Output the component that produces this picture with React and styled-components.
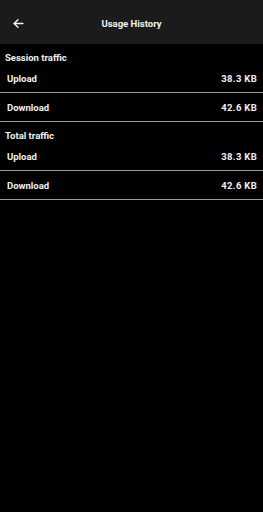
import styled, { createGlobalStyle } from "styled-components"

const GlobalStyle = createGlobalStyle`
  html, body {
    margin: 0;
    padding: 0;
    background: #000;
    min-height: 100vh;
  }
  * {
    box-sizing: border-box;
  }
`

const Pantalla = styled.div`
  min-height: 100vh;
  background: #000;
  color: #f2f2f2;
  font-family: Roboto, "Liberation Sans", sans-serif;
  font-weight: 700;
  font-size: 9.5px;
`

const Cabecera = styled.header`
  height: 44px;
  background: #1b1b1b;
  display: flex;
  align-items: center;
  padding-top: 3px;
`

const BotonAtras = styled.button`
  width: 36px;
  height: 36px;
  border: none;
  background: transparent;
  display: flex;
  align-items: center;
  justify-content: center;
  padding: 0;
  color: #f2f2f2;
`

const Titulo = styled.h1`
  flex: 1;
  margin: 0 36px 0 0;
  text-align: center;
  font-size: 9.5px;
  font-weight: 700;
`

const TituloSeccion = styled.div`
  padding: 8px 5px 0;
  line-height: 12px;
  height: 20px;
`

const Fila = styled.div`
  height: 29px;
  display: flex;
  align-items: center;
  justify-content: space-between;
  padding: 0 6px 0 7px;
  border-bottom: 1.5px solid #9a9a9a;
`

const Valor = styled.span`
  letter-spacing: 0.3px;
`

const secciones = [
  { titulo: "Session traffic", subida: "38.3 KB", bajada: "42.6 KB" },
  { titulo: "Total traffic", subida: "38.3 KB", bajada: "42.6 KB" },
]

const App = () => {
  return (
    <>
      <GlobalStyle />
      <Pantalla>
        <Cabecera>
          <BotonAtras aria-label="Back">
            <svg width="13" height="13" viewBox="0 0 24 24" fill="none" stroke="currentColor" strokeWidth="2.6" strokeLinecap="round" strokeLinejoin="round">
              <path d="M20 12H4" />
              <path d="M11 5l-7 7 7 7" />
            </svg>
          </BotonAtras>
          <Titulo>Usage History</Titulo>
        </Cabecera>
        {secciones.map((s) => (
          <section key={s.titulo}>
            <TituloSeccion>{s.titulo}</TituloSeccion>
            <Fila>
              <span>Upload</span>
              <Valor>{s.subida}</Valor>
            </Fila>
            <Fila>
              <span>Download</span>
              <Valor>{s.bajada}</Valor>
            </Fila>
          </section>
        ))}
      </Pantalla>
    </>
  )
}

export default App
